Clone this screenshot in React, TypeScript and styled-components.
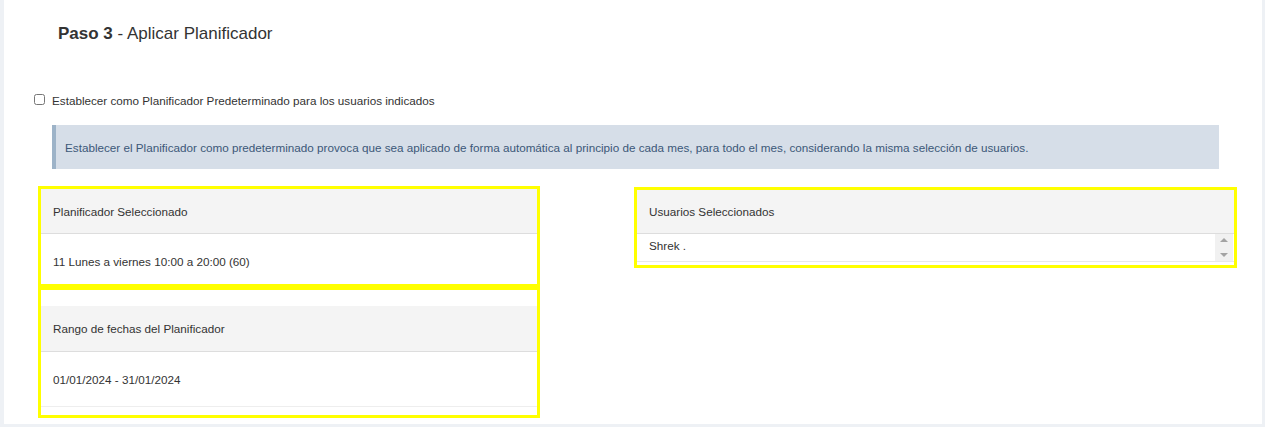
import React from "react";
import styled, { createGlobalStyle } from "styled-components";

const GlobalStyle = createGlobalStyle`
  html, body {
    margin: 0;
    padding: 0;
    background: #eef1f5;
  }
  body {
    font-family: "Liberation Sans", Arial, sans-serif;
    font-size: 11.7px;
    color: #333;
  }
`;

const Page = styled.div`
  width: 1265px;
  height: 427px;
  box-sizing: border-box;
  padding: 0 3px 3px 4px;
  background: #eef1f5;
`;

const Panel = styled.div`
  background: #fff;
  height: 424px;
  box-sizing: border-box;
  padding-top: 24px;
  display: flex;
  flex-direction: column;
`;

const Title = styled.h3`
  margin: 0 0 0 54px;
  font-size: 17px;
  line-height: 20px;
  font-weight: normal;
  color: #333;
  b {
    font-weight: bold;
  }
`;

const CheckRow = styled.label`
  display: flex;
  align-items: center;
  margin: 50px 0 0 30px;
  height: 14px;
  line-height: 14px;
  font-size: 11.7px;
  color: #333;
`;

const Check = styled.input`
  width: 11px;
  height: 11px;
  margin: -3px 7px 0 0;
`;

const Info = styled.div`
  margin: 17px 0 0 48px;
  width: 1167px;
  height: 44px;
  box-sizing: border-box;
  background: #d6dee8;
  border-left: 4px solid #9db3c8;
  padding-left: 9px;
  display: flex;
  align-items: center;
  color: #3c5878;
  font-size: 11.7px;
`;

const Columns = styled.div`
  display: flex;
  align-items: flex-start;
  margin: 17px 0 0 34px;
  gap: 94px;
`;

const Col = styled.div<{ $w: number }>`
  width: ${(p) => p.$w}px;
  display: flex;
  flex-direction: column;
`;

const Highlight = styled.div<{ $top?: number; $bottom?: number; $offset?: number }>`
  border: 3px solid #ffff00;
  margin-top: ${(p) => p.$offset ?? 0}px;
  padding-top: ${(p) => p.$top ?? 0}px;
  padding-bottom: ${(p) => p.$bottom ?? 0}px;
  background: #fff;
`;

const Heading = styled.div<{ $h: number }>`
  height: ${(p) => p.$h}px;
  background: #f4f4f4;
  border-bottom: 1px solid #dddddd;
  display: flex;
  align-items: center;
  padding-left: 12px;
  font-size: 11.7px;
  color: #333;
`;

const Body = styled.div<{ $h: number; $pt: number; $line?: boolean }>`
  height: ${(p) => p.$h}px;
  box-sizing: border-box;
  padding: ${(p) => p.$pt}px 0 0 12px;
  line-height: 14px;
  font-size: 11.7px;
  color: #333;
  border-bottom: ${(p) => (p.$line ? "1px solid #eeeeee" : "none")};
`;

const ListBox = styled.div`
  display: flex;
  height: 27px;
  border-bottom: 1px solid #e8e8e8;
  margin-bottom: 2px;
`;

const ListItems = styled.div`
  flex: 1;
  padding: 5px 0 0 12px;
  line-height: 14px;
  color: #333;
`;

const ScrollTrack = styled.div`
  width: 18px;
  margin-right: 1px;
  background: #f1f1f1;
  display: flex;
  flex-direction: column;
  align-items: center;
  justify-content: space-between;
  padding: 4px 0 4px;
  box-sizing: border-box;
`;

const Arrow = styled.span<{ $up?: boolean }>`
  width: 0;
  height: 0;
  border-left: 4px solid transparent;
  border-right: 4px solid transparent;
  ${(p) =>
    p.$up ? "border-bottom: 4px solid #a3a3a3;" : "border-top: 4px solid #a3a3a3;"}
`;

export default function App() {
  return (
    <>
      <GlobalStyle />
      <Page>
        <Panel>
          <Title>
            <b>Paso 3</b> - Aplicar Planificador
          </Title>
          <CheckRow>
            <Check type="checkbox" />
            Establecer como Planificador Predeterminado para los usuarios indicados
          </CheckRow>
          <Info>
            Establecer el Planificador como predeterminado provoca que sea aplicado de forma
            automática al principio de cada mes, para todo el mes, considerando la misma
            selección de usuarios.
          </Info>
          <Columns>
            <Col $w={502}>
              <Highlight>
                <Heading $h={44}>Planificador Seleccionado</Heading>
                <Body $h={50} $pt={21}>
                  11 Lunes a viernes 10:00 a 20:00 (60)
                </Body>
              </Highlight>
              <Highlight $top={16} $bottom={8}>
                <Heading $h={45}>Rango de fechas del Planificador</Heading>
                <Body $h={55} $pt={21} $line>
                  01/01/2024 - 31/01/2024
                </Body>
              </Highlight>
            </Col>
            <Col $w={603}>
              <Highlight $offset={1} $bottom={1}>
                <Heading $h={43}>Usuarios Seleccionados</Heading>
                <ListBox>
                  <ListItems>Shrek .</ListItems>
                  <ScrollTrack>
                    <Arrow $up />
                    <Arrow />
                  </ScrollTrack>
                </ListBox>
              </Highlight>
            </Col>
          </Columns>
        </Panel>
      </Page>
    </>
  );
}
